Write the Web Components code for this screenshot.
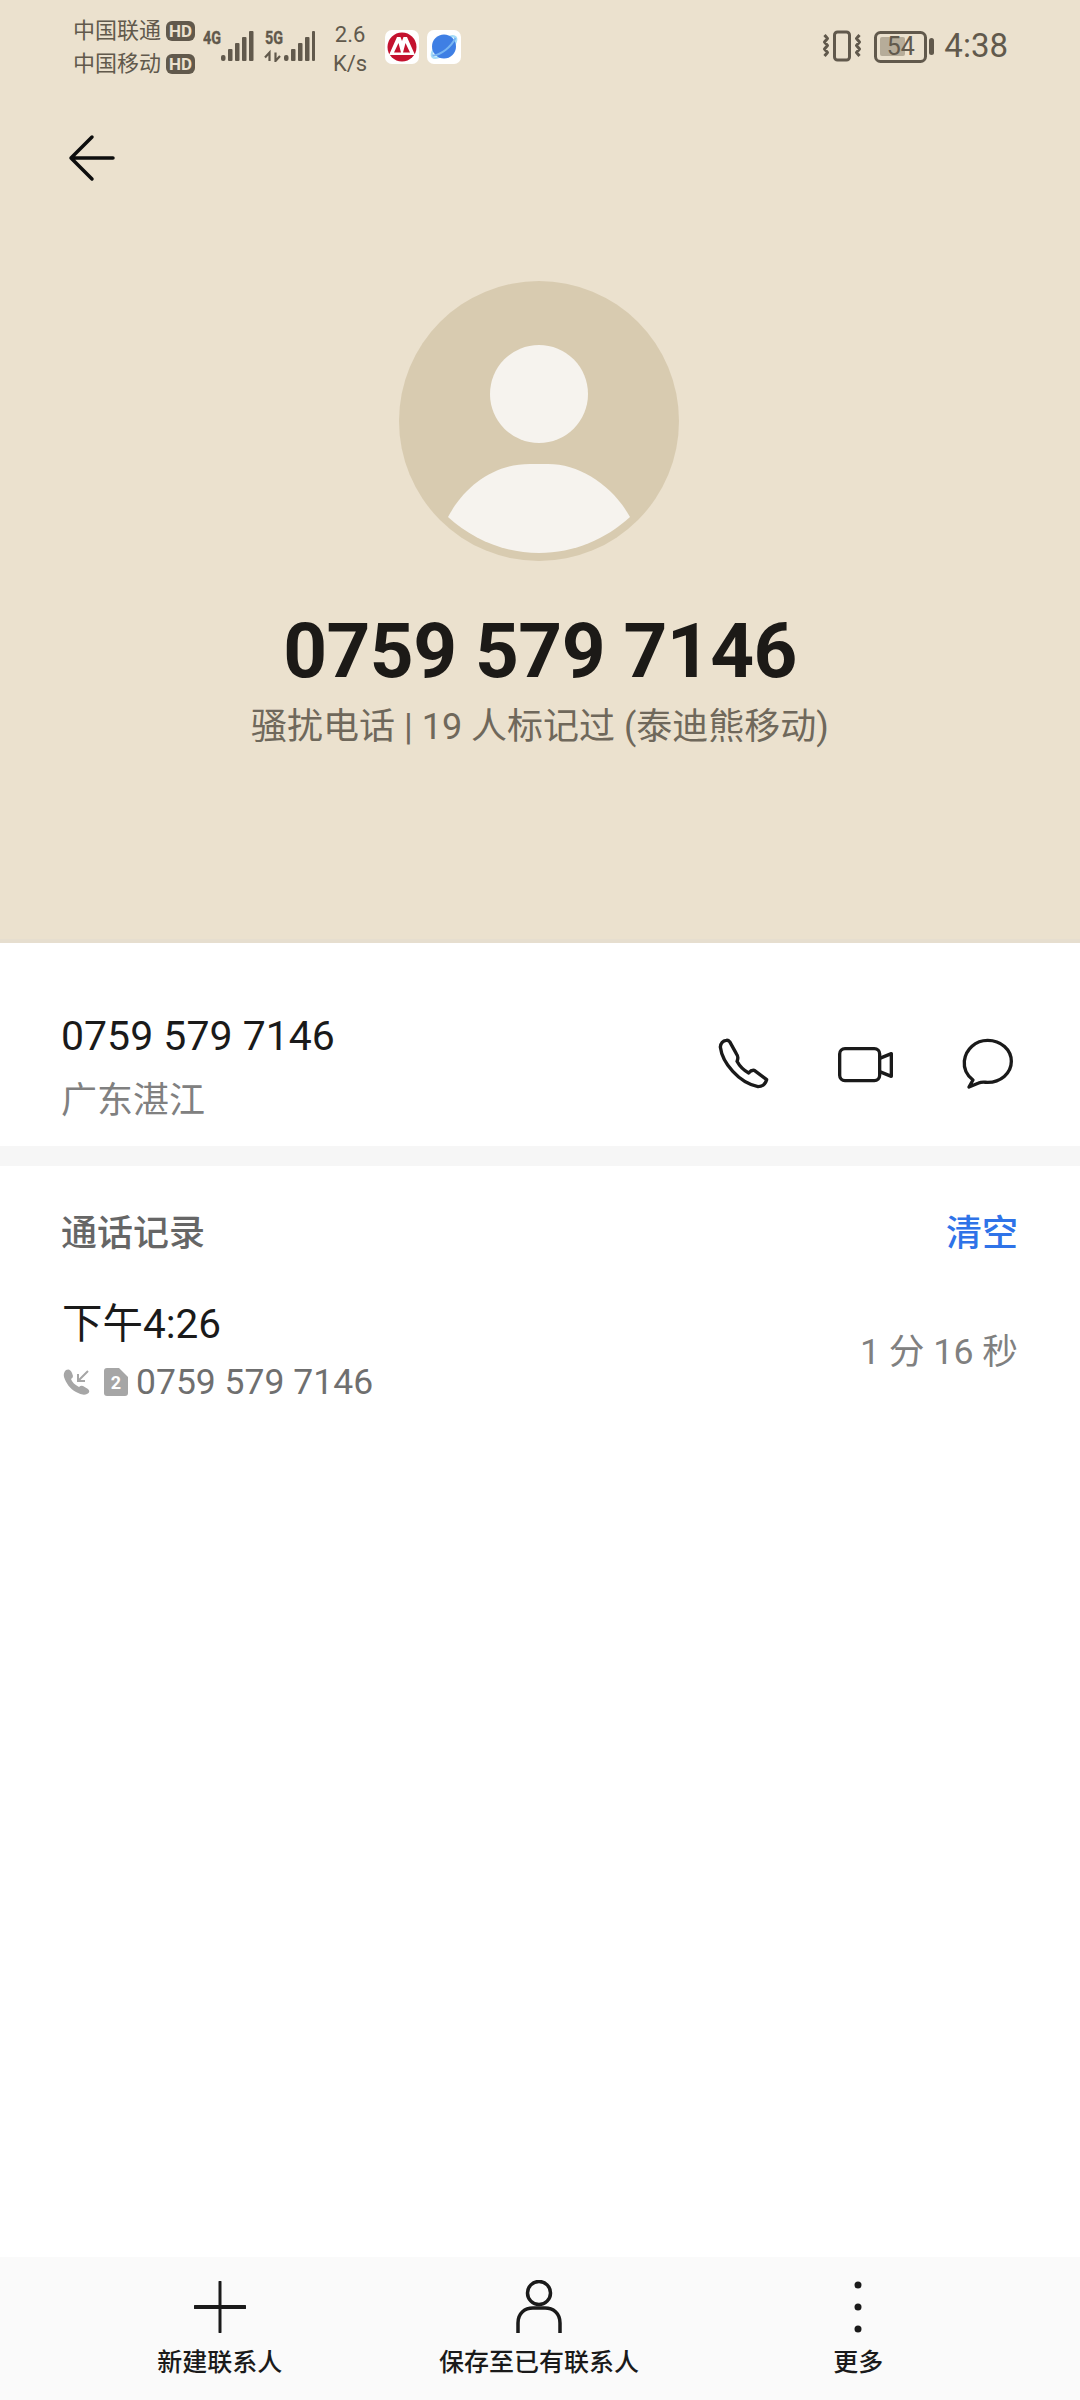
<!DOCTYPE html>
<html lang="zh"><head><meta charset="utf-8"><title>Contact</title>
<style>
html,body{margin:0;padding:0;background:#fff}
body{width:1080px;height:2400px;font-family:Roboto,"Noto Sans CJK SC",sans-serif}
</style></head><body>
<call-detail-screen>
  <contact-header slot="header" number="0759 579 7146" note="骚扰电话 | 19 人标记过 (泰迪熊移动)"></contact-header>
  <number-row number="0759 579 7146" place="广东湛江"></number-row>
  <call-log></call-log>
  <bottom-nav slot="footer"></bottom-nav>
</call-detail-screen>
<script>
function comp(name, html, init){
  customElements.define(name, class extends HTMLElement{
    constructor(){super();this.attachShadow({mode:'open'}).innerHTML=html;}
    connectedCallback(){ if(init) init(this); }
  });
}
comp('call-detail-screen',`<style>
:host{display:flex;flex-direction:column;width:1080px;height:2400px;overflow:hidden;background:#fff;font-family:Roboto,"Noto Sans CJK SC",sans-serif}
.main{flex:1;display:flex;flex-direction:column}
</style><slot name="header"></slot><div class="main"><slot></slot></div><slot name="footer"></slot>`);

comp('status-bar',`<style>
:host{display:flex;align-items:flex-start;height:92px;padding:0 72px 0 73px;color:#61594c;font-family:Roboto,"Noto Sans CJK SC",sans-serif;box-sizing:border-box}
.carriers{margin-top:14px;display:flex;flex-direction:column;flex:none}
.c{display:flex;align-items:center;height:33px;font-size:22px;line-height:33px;gap:5px;white-space:nowrap}
.hd{display:block;padding:0 3px;height:20px;border-radius:6px;background:#61594c;color:#ebe1ce;font-size:17px;font-weight:700;line-height:20px;text-align:center;white-space:nowrap}
.sig{margin:20px 0 0 8px;display:block;flex:none}
.speed{margin:20px 0 0 17px;width:36px;font-size:22px;line-height:29px;text-align:center;white-space:nowrap;display:flex;flex-direction:column;align-items:center}
.app{margin:30px 0 0 0;display:block}
.right{margin-left:auto;display:flex;align-items:flex-start}
.time{font-size:33px;line-height:32px;margin:30px 0 0 10px;white-space:nowrap}
.batt{position:relative;margin:31px 0 0 12px;width:60px;height:32px}
.batt svg{display:block}
.batt span{position:absolute;left:0;top:0;width:53px;height:32px;text-align:center;font-size:25px;line-height:32px}
</style>
<div class="carriers">
 <div class="c">中国联通<span class="hd">HD</span></div>
 <div class="c">中国移动<span class="hd">HD</span></div>
</div>
<svg class="sig" width="112" height="42" viewBox="0 -10 112 42" fill="#61594c">
 <text x="0" y="14" font-family="Roboto" font-weight="700" font-size="19" textLength="18" lengthAdjust="spacingAndGlyphs" stroke="#61594c" stroke-width=".4">4G</text>
 <rect x="18" y="25" width="4.500" height="6" rx="2"/><rect x="25" y="19" width="4.500" height="12" rx="1"/><rect x="32" y="13" width="4.500" height="18" rx="1"/><rect x="39" y="7" width="4.500" height="24" rx="1"/><rect x="46" y="1" width="4.500" height="30" rx="1"/>
 <text x="62" y="14" font-family="Roboto" font-weight="700" font-size="19" textLength="18" lengthAdjust="spacingAndGlyphs" stroke="#61594c" stroke-width=".4">5G</text>
 <path d="M66.500 31V22.500L62 27.500M72.500 22.500V31L77 26" stroke="#61594c" stroke-width="2.200" fill="none"/>
 <rect x="81" y="25" width="4.500" height="6" rx="2"/><rect x="88" y="19" width="4.500" height="12" rx="1"/><rect x="95" y="13" width="4.500" height="18" rx="1"/><rect x="102" y="7" width="4.500" height="24" rx="1"/><rect x="109" y="1" width="3" height="30" rx="1"/>
</svg>
<div class="speed"><span>2.6</span><span>K/s</span></div>
<svg class="app" style="margin-left:17px" width="34" height="34" viewBox="0 0 34 34">
 <rect width="34" height="34" rx="7" fill="#fff"/>
 <circle cx="17" cy="17" r="14.500" fill="#c4122f"/>
 <path d="M4 25 12 7h3.500L17 11l1.500-4H22l8 18z" fill="#fff"/>
 <path d="M9 22.500 13.500 13 16 22.500zM18 22.500 20.500 13 25 22.500z" fill="#c4122f"/>
</svg>
<svg class="app" style="margin-left:8px" width="34" height="34" viewBox="0 0 34 34">
 <rect width="34" height="34" rx="7" fill="#fff"/>
 <ellipse cx="17" cy="17" rx="15" ry="6" transform="rotate(-40 17 17)" fill="none" stroke="#a5dcf8" stroke-width="2.500"/>
 <circle cx="17" cy="16.500" r="12" fill="#3f7fe4"/>
 <path d="M5.500 25.500C14 25 24 17 28.500 8" stroke="#79b6f2" stroke-width="2" fill="none"/>
</svg>
<div class="right">
 <svg style="display:block;margin-top:30px" width="40" height="32" viewBox="0 0 40 32" fill="none" stroke="#61594c" stroke-width="3">
  <rect x="12.500" y="2" width="15" height="28" rx="3"/>
  <path d="M2.500 5l3 3.500-3 3.500 3 3.500-3 3.500 3 3.500-3 3.500M37.500 5l-3 3.500 3 3.500-3 3.500 3 3.500-3 3.500 3 3.500" stroke-linejoin="round"/>
 </svg>
 <div class="batt">
  <svg width="60" height="32" viewBox="0 0 60 32">
   <rect x="1.500" y="1.500" width="50" height="29" rx="5" fill="none" stroke="#61594c" stroke-width="3"/>
   <rect x="6" y="6" width="25" height="19" rx="2" fill="#b6ac99"/>
   <rect x="55" y="7" width="5" height="17" rx="2.500" fill="#61594c"/>
  </svg><span>54</span>
 </div>
 <div class="time">4:38</div>
</div>`);

comp('contact-header',`<style>
:host{display:block;height:943px;background:#ebe1ce;box-shadow:inset 0 -4px #e6decf;box-sizing:border-box;font-family:Roboto,"Noto Sans CJK SC",sans-serif}
.back{display:block;margin:41px 0 0 67px}
.av{display:block;margin:97px auto 0}
.name{margin-top:44px;text-align:center;font-size:76.500px;letter-spacing:-.55px;line-height:90px;font-weight:700;color:#1c1a17;white-space:nowrap}
.note{margin-top:8px;text-align:center;font-size:36px;line-height:46px;color:#6f685b;white-space:nowrap}
</style>
<status-bar></status-bar>
<svg class="back" width="50" height="50" viewBox="0 0 50 50" fill="none" stroke="#0d0d0d" stroke-width="3.500" stroke-linecap="round" stroke-linejoin="round">
 <path d="M46 25H4M25 4 4 25l21 21"/>
</svg>
<svg class="av" width="282" height="282" viewBox="19 20 282 282">
 <circle cx="159" cy="161" r="140" fill="#d8cbb0"/>
 <circle cx="159" cy="134" r="49" fill="#f6f3ee"/>
 <path d="M68 257C85 225 115 204 150 204h18c32 0 64 21 82 53-24 22-56 36-91 36s-67-14-91-36z" fill="#f6f3ee"/>
</svg>
<div class="name"></div><div class="note"></div>`,el=>{
  const r=el.shadowRoot;r.querySelector('.name').textContent=el.getAttribute('number');r.querySelector('.note').textContent=el.getAttribute('note');
});

comp('number-row',`<style>
:host{display:flex;align-items:flex-start;height:203px;padding:0 67px 0 61px;box-sizing:border-box;font-family:Roboto,"Noto Sans CJK SC",sans-serif}
.t{flex:1}
.n{margin-top:67px;font-size:41px;line-height:52px;color:#1a1a1a;white-space:nowrap}
.p{margin-top:13px;font-size:36px;line-height:52px;color:#808080}
svg{display:block;flex:none;overflow:visible;margin-top:96px}
</style>
<div class="t"><div class="n"></div><div class="p"></div></div>
<svg width="50" height="50" viewBox="118 118 150 150" fill="none" stroke="#1a1a1a" stroke-width="10" stroke-linejoin="round">
 <path d="M140 122Q124 124 122 142C128 190 178 250 235 261Q255 260 261 240L224 212Q215 210 207 220C192 212 180 200 172 185Q178 172 170 162L150 126Q146 121 140 122Z"/>
</svg>
<svg style="margin:104px 0 0 69px" width="55" height="36" viewBox="475 138 165 108" fill="none" stroke="#1a1a1a" stroke-width="10" stroke-linejoin="round">
 <rect x="480" y="143" width="120" height="96" rx="16"/><path d="M600 172 635 158V226L600 212"/>
</svg>
<svg style="margin-left:70px" width="50" height="50" viewBox="850 118 150 150" fill="none" stroke="#1a1a1a" stroke-width="10" stroke-linejoin="round">
 <path d="M868 262 880 241C860 226 852 206 854 184 858 148 888 122 924 122 964 122 995 150 995 185 995 222 962 248 924 248 914 248 906 246 897 250Z"/>
</svg>`,el=>{
  const r=el.shadowRoot;r.querySelector('.n').textContent=el.getAttribute('number');r.querySelector('.p').textContent=el.getAttribute('place');
});

comp('call-log',`<style>
:host{display:block;border-top:20px solid #f6f6f6;padding:0 62px 0 61px;font-family:Roboto,"Noto Sans CJK SC",sans-serif}
.h{display:flex;justify-content:space-between;margin-top:45px;font-size:36px;line-height:46px}
.h b{font-weight:500;color:#666}
.h a{color:#2f73e8;font-weight:500}
.row{display:flex;justify-content:space-between;align-items:center;margin-top:41px}
.time{font-size:40.500px;line-height:52px;color:#1a1a1a;margin-left:1px}
.sub{display:flex;align-items:center;margin-top:9px;height:46px;font-size:35.500px;color:#6f6f6f;white-space:nowrap}
.dur{font-size:35.700px;color:#808080;white-space:nowrap;margin-top:-6px}
svg{display:block;flex:none}
</style>
<div class="h"><b>通话记录</b><a>清空</a></div>
<div class="row"><div>
 <div class="time">下午4:26</div>
 <div class="sub">
  <svg style="margin-left:2px" width="28" height="28" viewBox="0 0 28 28" fill="#a6a6a6">
   <path d="M3 2Q7 0 9 5l1 3q0 2-2 3c1 3 4 6 8 8q2-2 4-1l5 3q3 3-1 5-4 2-11-2C7 21 3 15 1 9Q0 5 3 2Z"/>
   <path d="M25 3 15 13M15 6v7h7" fill="none" stroke="#a6a6a6" stroke-width="2"/>
  </svg>
  <svg style="margin-left:13px" width="24" height="28" viewBox="0 0 24 28"><path d="M3 0H15L24 9V25Q24 28 21 28H3Q0 28 0 25V3Q0 0 3 0Z" fill="#a6a6a6"/><text x="12" y="21" text-anchor="middle" font-family="Roboto" font-weight="700" font-size="18" fill="#fff">2</text></svg>
  <span style="margin-left:8px">0759 579 7146</span>
 </div>
</div><div class="dur">1 分 16 秒</div></div>`);

comp('nav-item',`<style>
:host{flex:1;display:flex;flex-direction:column;align-items:center;font-family:Roboto,"Noto Sans CJK SC",sans-serif}
.i{height:60px;display:flex;align-items:center;justify-content:center}
.l{margin-top:9px;font-size:25px;line-height:34px;font-weight:500;color:#1a1a1a;white-space:nowrap}
</style><div class="i"><slot name="icon"></slot></div><div class="l"><slot></slot></div>`);

comp('bottom-nav',`<style>
:host{display:flex;height:143px;background:#fafafa;padding:20px 62px 0 60px;box-sizing:border-box}
svg{display:block}
</style>
<nav-item><svg slot="icon" width="52" height="52" viewBox="0 0 52 52" fill="none" stroke="#1a1a1a"><path d="M26 1V51" stroke-width="3" stroke-linecap="round"/><path d="M1 26H51" stroke-width="4" stroke-linecap="round"/></svg>新建联系人</nav-item>
<nav-item><svg slot="icon" width="46" height="54" viewBox="0 0 46 54" fill="none" stroke="#1a1a1a" stroke-width="3.500"><circle cx="23" cy="13" r="11.500"/><path d="M2 53V43C2 33 9 28 17 28H29C37 28 44 33 44 43V53"/></svg>保存至已有联系人</nav-item>
<nav-item><svg slot="icon" width="8" height="52" viewBox="0 0 8 52" fill="#1a1a1a"><circle cx="4" cy="4" r="3.500"/><circle cx="4" cy="26" r="3.500"/><circle cx="4" cy="48" r="3.500"/></svg>更多</nav-item>`);
</script>
</body></html>
